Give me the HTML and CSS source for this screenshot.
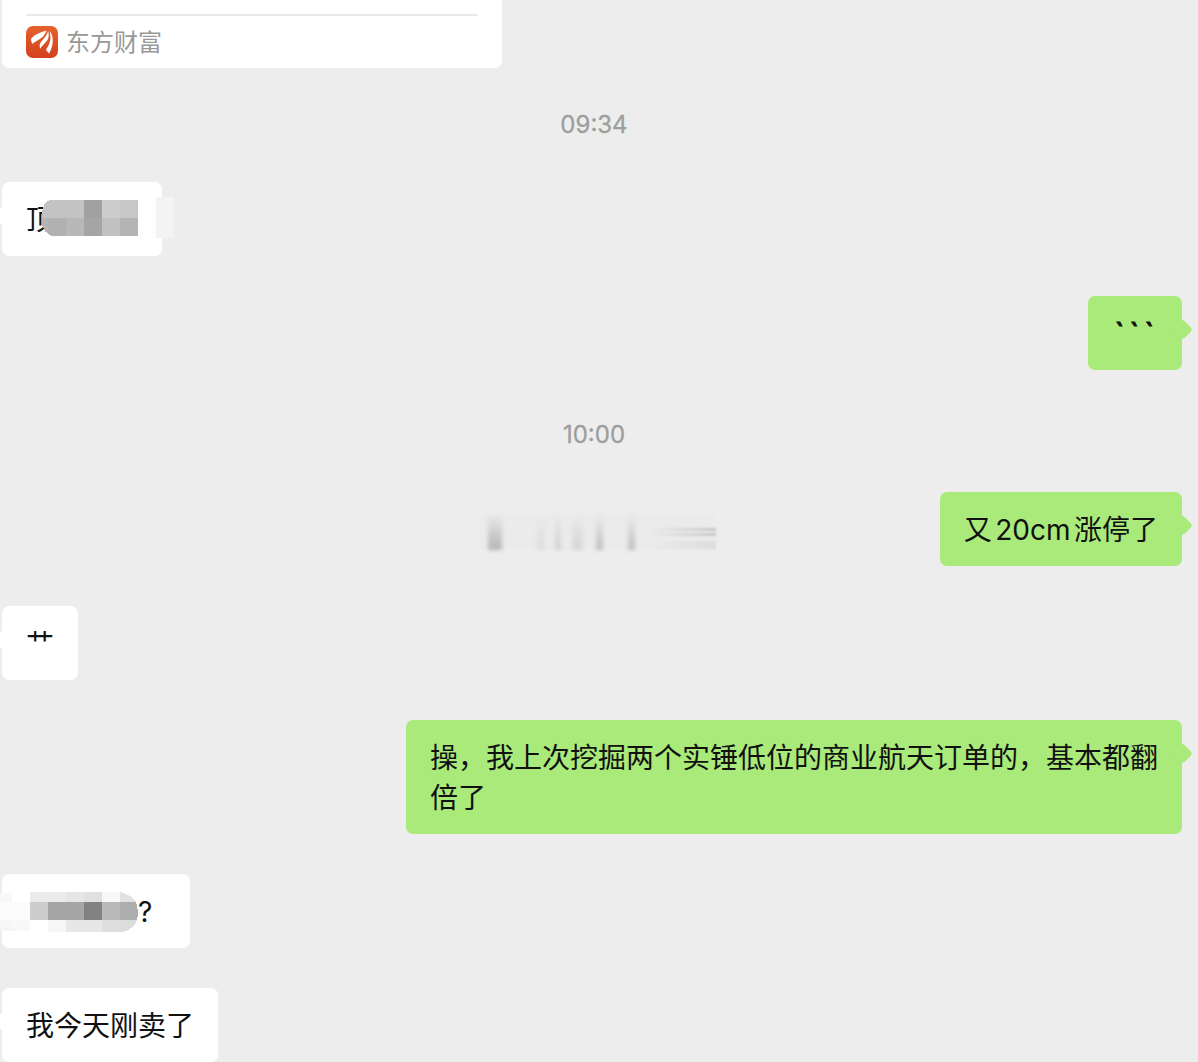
FILE: index.html
```html
<!DOCTYPE html>
<html lang="zh-CN">
<head>
    <meta charset="UTF-8">
    <meta name="viewport" content="width=device-width, initial-scale=1.0">
    <title>聊天</title>
    <link rel="stylesheet" href="styles.css">
</head>
<body>
    <main class="chat">
        <div class="share-card">
            <div class="share-source">
                <svg class="share-logo" viewBox="0 0 32 32">
                    <defs>
                        <linearGradient id="logoBg" x1="0" y1="0" x2="0" y2="1">
                            <stop offset="0" stop-color="#e5622c"/>
                            <stop offset="1" stop-color="#d4401f"/>
                        </linearGradient>
                    </defs>
                    <rect width="32" height="32" rx="7" fill="url(#logoBg)"/>
                    <path fill="#fff" d="M20.500 4.500C14 6.500 7.500 9 5 13Q5 15.500 6.500 18C9 14.500 18 13.500 20.500 4.500Z"/>
                    <path fill="#fff" d="M22 5C20.500 13 11 15.500 14.500 22.800C16 18 25.500 15 22 5Z"/>
                    <path fill="#fff" d="M23.500 5C27.500 9 28.500 18 23 27.800C22.500 26 20.500 25.500 20 23.500C23.500 19 26 13 23.500 5Z"/>
                </svg>
                <span>东方财富</span>
            </div>
        </div>

        <div class="time">09:34</div>

        <div class="bubble left name-bubble">顶
            <svg class="mosaic mosaic-name" viewBox="0 0 134 42" shape-rendering="crispEdges">
                <path fill="#c3c3c3" d="M10 3H44V21H2V15Q3 6 10 3Z"/>
                <path fill="#b5b5b5" d="M2 21H26V39H12Q4 36 2 27Z"/>
                <path fill="#b1b1b1" d="M8 21H26V39H12L8 36Z"/>
                <rect x="26" y="21" width="18" height="18" fill="#b8b8b8"/>
                <rect x="44" y="3" width="18" height="18" fill="#a1a1a1"/>
                <rect x="44" y="21" width="18" height="18" fill="#a5a5a5"/>
                <rect x="62" y="3" width="18" height="18" fill="#cdcdcd"/>
                <rect x="62" y="21" width="18" height="18" fill="#c1c1c1"/>
                <rect x="80" y="3" width="18" height="18" fill="#c7c7c7"/>
                <rect x="80" y="21" width="18" height="18" fill="#b4b4b4"/>
                <rect x="98" y="0" width="18" height="41" fill="#fefefe"/>
                <rect x="116" y="0" width="18" height="41" fill="#f3f3f3"/>
            </svg>
        </div>

        <div class="bubble right ticks">```</div>

        <div class="time time-late">10:00</div>

        <div class="row">
            <div class="smudge">
                <i class="streak s1"></i>
                <i class="streak s2"></i>
                <i class="streak s3"></i>
                <i class="streak s4"></i>
                <i class="streak s5"></i>
                <i class="streak s6"></i>
                <i class="bar b1"></i>
                <i class="bar b2"></i>
                <i class="bar b3"></i>
            </div>
            <div class="bubble right">又<span class="latin">20cm</span>涨停了</div>
        </div>

        <div class="bubble left">艹</div>

        <div class="bubble right long">操，我上次挖掘两个实锤低位的商业航天订单的，基本都翻倍了</div>

        <div class="bubble left ask-bubble">
            <svg class="mosaic mosaic-ask" viewBox="0 0 138 40" shape-rendering="crispEdges">
                <path fill="#f7f7f7" d="M0 1H12V10H0Z"/>
                <rect x="0" y="10" width="30" height="18" fill="#fcfcfc"/>
                <rect x="0" y="28" width="12" height="11" fill="#f6f6f6"/>
                <rect x="12" y="28" width="18" height="11" fill="#f9f9f9"/>
                <rect x="30" y="0" width="36" height="10" fill="#ebebeb"/>
                <rect x="66" y="0" width="18" height="10" fill="#e6e6e6"/>
                <rect x="84" y="0" width="18" height="10" fill="#e0e0e0"/>
                <rect x="102" y="0" width="18" height="10" fill="#f8f8f8"/>
                <path fill="#e2e2e2" d="M120 0Q131 2 136 10H120Z"/>
                <rect x="30" y="10" width="18" height="18" fill="#cdcdcd"/>
                <rect x="48" y="10" width="36" height="18" fill="#a6a6a6"/>
                <rect x="84" y="10" width="18" height="18" fill="#828282"/>
                <rect x="102" y="10" width="18" height="18" fill="#b9b9b9"/>
                <path fill="#aeaeae" d="M120 10H136Q139 19 137 28H120Z"/>
                <rect x="48" y="28" width="18" height="12" fill="#f6f6f6"/>
                <rect x="66" y="28" width="36" height="12" fill="#e7e7e7"/>
                <rect x="102" y="28" width="18" height="12" fill="#dfdfdf"/>
                <path fill="#dcdcdc" d="M120 28H137Q133 38 122 40H120Z"/>
            </svg>
            <span>?</span>
        </div>

        <div class="bubble left">我今天刚卖了</div>
    </main>
</body>
</html>
```
FILE: styles.css
```css
:root {
    --page-bg: #ededed;
    --bubble-white: #fff;
    --bubble-green: #a9ea7a;
    --text: #111;
    --text-muted: #9d9d9d;
}

body {
    margin: 0;
    background-color: var(--page-bg);
    color: var(--text);
    font-family: Inter, "Noto Sans CJK SC", sans-serif;
    font-size: 28px;
    line-height: 40px;
    overflow: hidden;
}

.chat {
    display: flex;
    flex-direction: column;
    gap: 40px;
    height: 1062px;
    padding: 0 16px 0 2px;
    box-sizing: border-box;
}

.chat > * { flex-shrink: 0; }

/* Shared link card */
.share-card {
    width: 500px;
    height: 68px;
    padding: 14px 24px 0;
    box-sizing: border-box;
    background-color: var(--bubble-white);
    border-radius: 0 0 7px 7px;
}

.share-source {
    display: flex;
    align-items: center;
    gap: 8px;
    height: 52px;
    border-top: 2px solid #e9e9e9;
    color: #999;
    font-family: "Noto Sans CJK SC", sans-serif;
    font-size: 24px;
}

.share-source span { padding-bottom: 2px; }
.share-logo { width: 32px; height: 32px; }

.time {
    height: 34px;
    padding: 0 0 0 4px;
    box-sizing: border-box;
    text-align: center;
    color: var(--text-muted);
    font-size: 24px;
    line-height: 34px;
    -webkit-text-stroke: 0.3px var(--text-muted);
}

.time-late { height: 42px; padding-top: 8px; }

/* Bubbles */
.bubble {
    position: relative;
    padding: 18px 24px 16px;
    border-radius: 7px;
}

.left { align-self: flex-start; background-color: var(--bubble-white); }
.right { align-self: flex-end; background-color: var(--bubble-green); }

.left::before,
.right::after {
    content: "";
    position: absolute;
    top: 26px;
    width: 15px;
    height: 15px;
    border-radius: 4px;
    transform: rotate(45deg);
}

.left::before { left: -6px; background-color: var(--bubble-white); }
.right::after { right: -8px; background-color: var(--bubble-green); }

.name-bubble { width: 112px; }
.ask-bubble { width: 140px; }
.ask-bubble span { margin-left: 112px; }
.long { width: 728px; }
.latin { margin: 0 3.5px; }

.ticks {
    width: 43px;
    height: 40px;
    padding: 17px 24px 17px 27px;
    letter-spacing: 5.8px;
    white-space: nowrap;
    -webkit-text-stroke: 1.2px var(--text);
}

.row { display: flex; justify-content: space-between; height: 74px; }

.mosaic { position: absolute; }
.mosaic-name { left: 38px; top: 15px; width: 134px; height: 42px; }
.mosaic-ask { left: -2px; top: 18px; width: 138px; height: 40px; }

/* Smudged notice */
.smudge {
    position: relative;
    width: 236px;
    height: 36px;
    margin: 22px 0 0 478px;
    background-color: #ebebeb;
}

.streak, .bar { position: absolute; filter: blur(1px); }
.streak {
    top: 0;
    bottom: 0;
    background: linear-gradient(rgba(150, 150, 150, 0), rgba(150, 150, 150, 0.65));
    filter: blur(2px);
}
.s1 { left: 8px; width: 14px; }
.s2 { left: 57px; width: 8px; opacity: 0.25; }
.s3 { left: 75px; width: 6px; opacity: 0.5; }
.s4 { left: 92px; width: 11px; opacity: 0.4; }
.s5 { left: 116px; width: 7px; opacity: 0.8; }
.s6 { left: 148px; width: 7px; opacity: 0.8; }
.bar { background: linear-gradient(to right, rgba(190, 190, 190, 0), rgba(190, 190, 190, 0.8)); }
.b1 { left: 170px; top: 14px; width: 66px; height: 3px; }
.b2 { left: 170px; top: 19px; width: 66px; height: 3px; }
.b3 { left: 170px; top: 27px; width: 66px; height: 8px; opacity: 0.4; }
```
